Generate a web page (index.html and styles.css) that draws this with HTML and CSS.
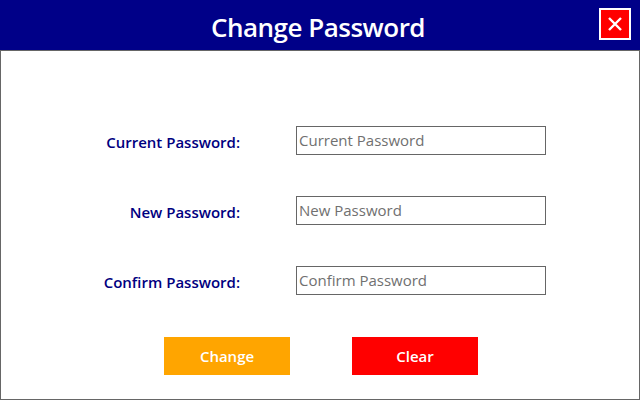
FILE: index.html
```html
<!DOCTYPE html>
<html>
<head>
<meta charset="utf-8">
<link rel="stylesheet" href="styles.css">
</head>
<body>
<div class="dialog">
  <div class="header">
    <h1 class="title">Change Password</h1>
    <button class="close" aria-label="Close">
      <svg width="16" height="16" viewBox="0 0 16 16"><path d="M2 2 L14 14 M14 2 L2 14" stroke="#fff" stroke-width="2.4" fill="none"/></svg>
    </button>
  </div>
  <div class="content">
    <div class="form">
      <label class="label">Current Password:</label>
      <input class="field" type="password" placeholder="Current Password">
      <label class="label">New Password:</label>
      <input class="field" type="password" placeholder="New Password">
      <label class="label">Confirm Password:</label>
      <input class="field" type="password" placeholder="Confirm Password">
    </div>
    <div class="actions">
      <button class="btn btn-change">Change</button>
      <button class="btn btn-clear">Clear</button>
    </div>
  </div>
</div>
</body>
</html>
```

FILE: styles.css
```css
html, body {
  margin: 0;
  padding: 0;
  background: #fff;
}
.dialog {
  width: 640px;
  height: 400px;
  display: flex;
  flex-direction: column;
  font-family: "Open Sans", "Noto Sans", sans-serif;
}
.header {
  position: relative;
  height: 50px;
  background: #000088;
  display: flex;
  align-items: center;
  justify-content: center;
}
.title {
  margin: 0;
  color: #fff;
  font-size: 26px;
  font-weight: 600;
  letter-spacing: -0.5px;
  padding-top: 3px;
  padding-right: 4px;
}
.close {
  position: absolute;
  left: 599px;
  top: 8px;
  width: 32px;
  height: 32px;
  box-sizing: border-box;
  border: 2px solid #fff;
  background: #ff0000;
  padding: 0;
  display: flex;
  align-items: center;
  justify-content: center;
}
.content {
  flex: 1;
  border: 1px solid #666;
  display: flex;
  flex-direction: column;
}
.form {
  display: grid;
  grid-template-columns: 239px 250px;
  column-gap: 56px;
  row-gap: 41px;
  padding-top: 75px;
  align-items: center;
}
.label {
  justify-self: end;
  color: #000080;
  font-weight: 600;
  font-size: 15px;
  padding-top: 3px;
}
.field {
  width: 250px;
  height: 29px;
  box-sizing: border-box;
  border: 1px solid #666;
  padding: 0 2px 2px;
  font-family: inherit;
  font-size: 15px;
  outline: none;
}
.field::placeholder {
  color: #707070;
}
.actions {
  display: flex;
  gap: 62px;
  padding-left: 163px;
  padding-top: 42px;
}
.btn {
  width: 126px;
  height: 38px;
  border: none;
  color: #fff;
  font-family: inherit;
  font-weight: 600;
  font-size: 15px;
  padding: 0;
}
.btn-change {
  background: #ffa500;
}
.btn-clear {
  background: #ff0000;
}
```
